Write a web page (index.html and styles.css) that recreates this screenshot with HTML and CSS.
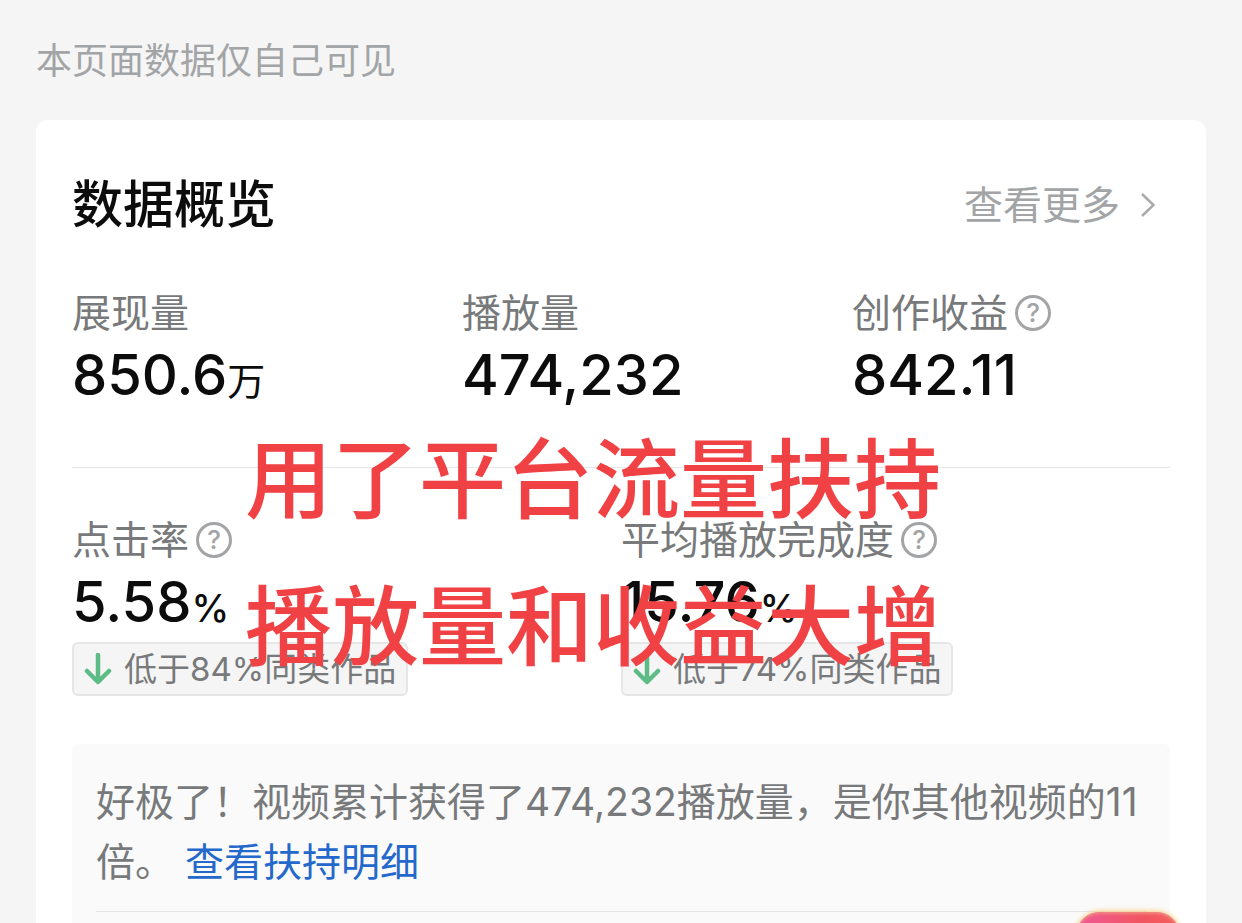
FILE: index.html
```
<!DOCTYPE html>
<html lang="zh-CN">
  <head>
    <meta charset="UTF-8" />
    <meta name="viewport" content="width=device-width, initial-scale=1.0" />
    <title>数据概览</title>
    <link rel="stylesheet" href="styles.css" />
  </head>
  <body>
    <main class="page">
      <p class="tip">本页面数据仅自己可见</p>

      <section class="card">
        <div class="card-head">
          <h1 class="title">数据概览</h1>
          <a href="#" class="more">
            查看更多
            <svg class="chevron" viewBox="0 0 16 26" fill="none">
              <path d="M2 2l11.500 11L2 24" />
            </svg>
          </a>
        </div>

        <div class="stats three">
          <div class="stat">
            <h2 class="label">展现量</h2>
            <p class="value">850.6<span class="unit wan">万</span></p>
          </div>
          <div class="stat">
            <h2 class="label">播放量</h2>
            <p class="value">474,232</p>
          </div>
          <div class="stat">
            <h2 class="label">
              创作收益<button type="button" class="help">?</button>
            </h2>
            <p class="value">842.11</p>
          </div>
        </div>

        <div class="stats two">
          <div class="stat">
            <h2 class="label">
              点击率<button type="button" class="help">?</button>
            </h2>
            <p class="value">5.58<span class="unit">%</span></p>
            <p class="chip">
              <svg class="arrow" viewBox="0 0 28 32" fill="none">
                <path d="M14 2v26M3 18l11 11 11-11" />
              </svg>
              低于84%同类作品
            </p>
          </div>
          <div class="stat">
            <h2 class="label">
              平均播放完成度<button type="button" class="help">?</button>
            </h2>
            <p class="value">15.76<span class="unit">%</span></p>
            <p class="chip">
              <svg class="arrow" viewBox="0 0 28 32" fill="none">
                <path d="M14 2v26M3 18l11 11 11-11" />
              </svg>
              低于74%同类作品
            </p>
          </div>
        </div>

        <div class="note">
          <p class="note-text">
            好极了！视频累计获得了474,232播放量，是你其他视频的11倍。
            <a href="#" class="detail">查看扶持明细</a>
          </p>
          <span class="badge"></span>
        </div>

        <!-- caption over the stats -->
        <p class="caption">用了平台流量扶持<br />播放量和收益大增</p>
      </section>
    </main>
  </body>
</html>
```

FILE: styles.css
```
* {
  margin: 0;
  padding: 0;
  box-sizing: border-box;
}

body {
  background-color: #f5f5f5;
  font-family: Inter, "Noto Sans CJK SC", sans-serif;
  color: #0c0c0c;
}

.page {
  height: 100vh;
  padding: 33px 36px 0;
  overflow: hidden;
}

.tip {
  font-size: 36px;
  line-height: 56px;
  color: #a2a4a6;
}

.card {
  position: relative;
  margin-top: 31px;
  padding: 49px 36px;
  background-color: white;
  border-radius: 12px;
}

.card-head {
  display: flex;
  justify-content: space-between;
  align-items: center;
  padding-right: 14px;
}
.title {
  font-size: 51px;
  line-height: 72px;
  font-weight: 500;
}
.more {
  display: flex;
  align-items: center;
  gap: 20px;
  font-size: 39px;
  line-height: 60px;
  color: #a2a4a6;
  text-decoration: none;
}
.chevron {
  width: 16px;
  height: 26px;
  stroke: #a8aaac;
  stroke-width: 2.5;
}

.stats {
  display: grid;
  padding-top: 42px;
}
.three {
  grid-template-columns: 390px 390px 1fr;
  padding-bottom: 60px;
  border-bottom: 1px solid #e6e6e6;
}
.two {
  grid-template-columns: 1fr 1fr;
}
.label {
  display: flex;
  align-items: center;
  gap: 7px;
  font-size: 39px;
  line-height: 60px;
  font-weight: 400;
  color: #77797b;
}
.help {
  width: 36px;
  height: 36px;
  border: 3px solid #a2a4a6;
  border-radius: 50%;
  background: none;
  font-family: Inter, sans-serif;
  font-size: 26px;
  line-height: 30px;
  font-weight: 500;
  color: #a2a4a6;
}
.value {
  font-size: 56px;
  line-height: 64px;
  font-weight: 500;
}
.unit {
  font-size: 38px;
  line-height: 0;
}
.wan {
  font-weight: 400;
}
.chip {
  display: inline-flex;
  align-items: center;
  gap: 12px;
  margin-top: 8px;
  padding: 0 10px;
  border: 2px solid #e6e6e6;
  border-radius: 6px;
  background-color: #f5f5f5;
  font-size: 33px;
  line-height: 50px;
  color: #77797b;
}
.arrow {
  width: 28px;
  height: 32px;
  stroke: #5dbb85;
  stroke-width: 4.5;
  stroke-linecap: round;
  stroke-linejoin: round;
}

.note {
  position: relative;
  margin-top: 48px;
  padding: 28px 24px;
  border-radius: 6px;
  background-color: #fafafa;
}
.note-text {
  padding-bottom: 19px;
  border-bottom: 1px solid #e6e6e6;
  font-size: 39px;
  line-height: 60px;
  color: #77797b;
}
.detail {
  color: #2468cc;
  text-decoration: none;
}
.badge {
  position: absolute;
  top: 168px;
  right: -10px;
  width: 104px;
  height: 48px;
  border-radius: 24px;
  background: linear-gradient(100deg, #ee5a98, #f25560 60%, #f4605c);
  box-shadow: inset 0 2px 3px #f08a80, 0 0 5px 1px #fbc97e;
}

.caption {
  position: absolute;
  top: 287px;
  left: 0;
  width: 100%;
  padding-right: 56px;
  text-align: center;
  font-size: 87px;
  line-height: 147px;
  font-weight: 500;
  color: #f04144;
}
```
